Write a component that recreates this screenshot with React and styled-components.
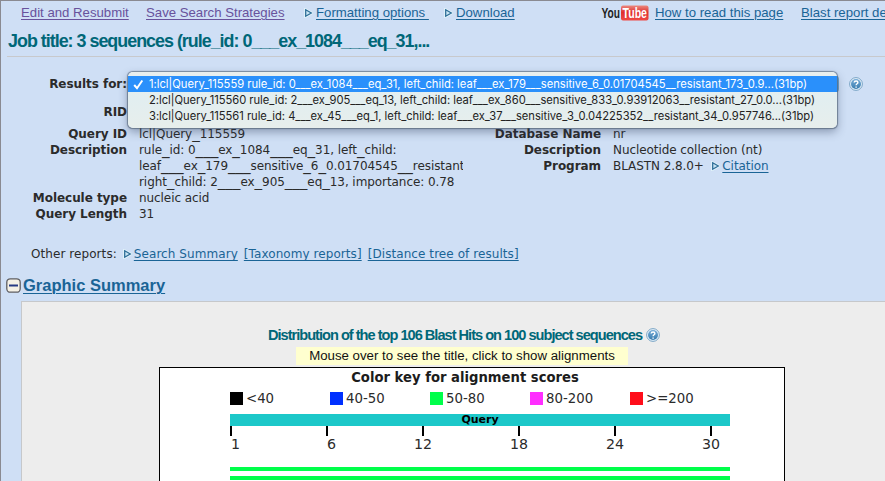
import React from 'react';
import styled, { createGlobalStyle } from 'styled-components';

const GlobalStyle = createGlobalStyle`
  * { box-sizing: border-box; }
  body { margin: 0; overflow: hidden; }
`;

const arial = '"Liberation Sans", Arial, sans-serif';
const verdana = '"DejaVu Sans", Verdana, sans-serif';

const Page = styled.div`
  position: relative;
  width: 885px;
  height: 481px;
  overflow: hidden;
  border: solid #8a8a91;
  border-width: 1px 0 0 1px;
  background: #cfdff5;
  color: #2b2b2b;
  font: 12px/16px ${verdana};
  white-space: nowrap;
`;

const Toolbar = styled.nav`
  display: flex;
  align-items: center;
  height: 24px;
  padding-left: 20px;
  font: 13.2px/16px ${arial};
`;

const ToolbarItem = styled.div`
  display: flex;
  align-items: center;
  flex: none;
  width: ${(p) => p.$width}px;
`;

const Link = styled.a`
  color: ${(p) => (p.$visited ? '#68529c' : '#1a6496')};
  text-decoration: underline;
  text-decoration-thickness: 1px;
  text-underline-offset: 2px;
  white-space: pre;
`;

const ArrowSvg = styled.svg`
  flex: none;
  width: 9px;
  height: 10px;
  margin-right: ${(p) => p.$gap}px;
`;

const HelpSvg = styled.svg`
  flex: none;
  width: 14px;
  height: 14px;
`;

const YouTube = styled.div`
  display: flex;
  align-items: center;
  margin-right: 6px;
  height: 16px;
  font: 700 13px/14px ${arial};
`;

const LogoSvg = styled.svg`
  width: 48px;
  height: 16px;
`;

const JobTitle = styled.h1`
  height: 32px;
  margin: 0 0 0 6px;
  padding-left: 1px;
  border-bottom: 1px solid #c8c9cc;
  color: #006778;
  font: 700 17.9px/32px ${arial};
  letter-spacing: -1px;
`;

const ResultsRow = styled.div`
  display: flex;
  align-items: center;
  height: 18px;
  margin-top: 18px;
`;

const Label = styled.b`
  flex: none;
  width: 126px;
  text-align: right;
  letter-spacing: -0.05px;
`;

const SelectBox = styled.div`
  width: 711px;
  height: 18px;
  margin: 0 10px 0 1px;
  border: 1px solid #6ea8d4;
  border-radius: 4px;
  background: #78b4e8;
`;

const RidRow = styled.div`
  display: flex;
  margin: 11px 0 6px;
`;

const Details = styled.div`
  display: flex;
`;

const DetailColumn = styled.dl`
  width: ${(p) => p.$width}px;
  margin: 0;
`;

const DetailRow = styled.div`
  display: flex;
`;

const Value = styled.div`
  display: flex;
  flex-direction: column;
  width: 324px;
  margin-left: 12px;
  overflow: hidden;
  letter-spacing: -0.07px;
`;

const InlineValue = styled.div`
  display: flex;
  align-items: center;
`;

const Rule = styled.span`
  font-size: 15.2px;
  line-height: 0;
`;

const Reports = styled.div`
  display: flex;
  align-items: center;
  gap: 6px;
  margin: 24px 0 0 30px;
  letter-spacing: 0.07px;
`;

const SectionHeader = styled.div`
  display: flex;
  align-items: center;
  gap: 2px;
  height: 20px;
  margin: 13px 0 0 5px;
`;

const SectionLink = styled(Link)`
  font: 700 16.5px/20px ${arial};
`;

const Panel = styled.section`
  display: flex;
  flex-direction: column;
  height: 200px;
  margin: 6px 0 0 20px;
  padding: 23px 0 0 137px;
  border: solid #c6c8cb;
  border-width: 1px 0 0 1px;
  background: #ededed;
`;

const ChartTitle = styled.div`
  display: flex;
  justify-content: center;
  align-items: center;
  gap: 4px;
  width: 610px;
  height: 20px;
  color: #006778;
  font: 700 14.6px/20px ${arial};
  letter-spacing: -1px;
`;

const Hint = styled.div`
  width: 332px;
  height: 18px;
  margin: 2px 0 2px 137px;
  background: #ffffcf;
  color: #111;
  font: 13.26px/18px ${arial};
  text-align: center;
`;

const Chart = styled.div`
  width: 626px;
  height: 140px;
  padding: 1px 54px 0 70px;
  border: 1px solid #000;
  background: #fff;
`;

const KeyTitle = styled.div`
  width: 470px;
  font: 700 13.2px/17px ${verdana};
  text-align: center;
  color: #1c1c1c;
`;

const Key = styled.div`
  display: grid;
  grid-template-columns: repeat(5, 100px);
  margin-top: 6px;
`;

const KeyItem = styled.div`
  display: flex;
  align-items: center;
  gap: 3px;
  height: 13px;
  font-size: 13.3px;
`;

const Swatch = styled.span`
  width: 13px;
  height: 13px;
  background: ${(p) => p.$color};
`;

const QueryBar = styled.div`
  width: 500px;
  height: 12px;
  margin-top: 9px;
  background: #1dc8c9;
  color: #000;
  font: 700 11px/12px ${verdana};
  text-align: center;
`;

const Axis = styled.div`
  display: grid;
  grid-template-columns: repeat(6, 96px);
  height: 41px;
`;

const Tick = styled.div`
  &::before {
    content: '';
    display: block;
    width: 2px;
    height: 10px;
    background: #000;
  }
`;

const TickLabel = styled.div`
  margin-left: ${(p) => (p.$wide ? -8 : 1)}px;
  font-size: 14.2px;
`;

const Hit = styled.div`
  width: 500px;
  height: 4px;
  margin-bottom: 5px;
  background: #00ff4a;
`;

const Menu = styled.div`
  position: absolute;
  left: 127px;
  top: 71px;
  width: 709px;
  height: 56px;
  padding-top: 4px;
  border-radius: 5px;
  background: linear-gradient(#e9efee, #e2eef0 50%, #e7eeec);
  box-shadow: 0 0 1px 0.5px rgba(70, 85, 105, 0.6), 0 4px 10px rgba(40, 55, 85, 0.42);
  font: 11.2px/16px Inter, sans-serif;
`;

const Option = styled.div`
  display: flex;
  align-items: center;
  height: 16px;
  background: ${(p) => (p.$selected ? '#2a90fb' : 'transparent')};
  color: ${(p) => (p.$selected ? '#fff' : '#222')};
  letter-spacing: ${(p) => p.$spacing || 0}px;
`;

const CheckSlot = styled.span`
  display: flex;
  width: 21px;
  padding-left: 5px;
`;

function Arrow({ gap = 3 }) {
  return (
    <ArrowSvg $gap={gap} viewBox="0 0 9 10">
      <path d="M1.5 1.5 7.5 5 1.5 8.5Z" fill="#d5effa" stroke="#e4f5fb" strokeWidth="2.6" />
      <path d="M1.7 1.8 7.3 5 1.7 8.2Z" fill="#c9e5f3" stroke="#306f99" strokeWidth="1.3" />
    </ArrowSvg>
  );
}

function Help() {
  return (
    <HelpSvg viewBox="0 0 14 14">
      <defs>
        <linearGradient id="helpFill" x1="0" y1="0" x2="0" y2="1">
          <stop offset="0" stopColor="#77add8" />
          <stop offset="1" stopColor="#397cae" />
        </linearGradient>
      </defs>
      <circle cx="7" cy="7" r="6.4" fill="#e5f1fa" stroke="#6f9dc0" strokeWidth="0.9" />
      <circle cx="7" cy="7" r="5" fill="url(#helpFill)" />
      <path d="M5.2 5.6C5.2 3.4 8.9 3.5 8.9 5.5 8.9 6.8 7.1 6.7 7.1 8.2M7.1 9.4v1.3" fill="none" stroke="#fff" strokeWidth="1.4" />
    </HelpSvg>
  );
}

// The underscores run together as one continuous rule.
function Underscored({ text }) {
  return (
    <span>
      {text.split(/(_+)/).map((part, i) => (part[0] === '_' ? <Rule key={i}>{part}</Rule> : part))}
    </span>
  );
}

const options = [
  '1:lcl|Query_115559 rule_id: 0___ex_1084___eq_31, left_child: leaf___ex_179___sensitive_6_0.01704545__resistant_173_0.9...(31bp)',
  '2:lcl|Query_115560 rule_id: 2___ex_905___eq_13, left_child: leaf___ex_860___sensitive_833_0.93912063__resistant_27_0.0...(31bp)',
  '3:lcl|Query_115561 rule_id: 4___ex_45___eq_1, left_child: leaf___ex_37___sensitive_3_0.04225352__resistant_34_0.957746...(31bp)',
];

const scores = [
  ['#000000', '<40'],
  ['#0030ff', '40-50'],
  ['#00ff4a', '50-80'],
  ['#ff2eff', '80-200'],
  ['#ff0d1a', '>=200'],
];

const ticks = [1, 6, 12, 18, 24, 30];

export default function App() {
  return (
    <Page>
      <GlobalStyle />
      <Toolbar>
        <ToolbarItem $width={125}><Link $visited>Edit and Resubmit</Link></ToolbarItem>
        <ToolbarItem $width={158}><Link $visited>Save Search Strategies</Link></ToolbarItem>
        <ToolbarItem $width={140}><Arrow /><Link>{'Formatting options '}</Link></ToolbarItem>
        <ToolbarItem $width={157}><Arrow /><Link>Download</Link></ToolbarItem>
        <ToolbarItem $width={200}>
          <YouTube>
            <LogoSvg viewBox="0 0 48 16">
              <defs>
                <linearGradient id="tube" x1="0" y1="0" x2="0" y2="1">
                  <stop offset="0" stopColor="#ea8a80" />
                  <stop offset="0.45" stopColor="#e02f2d" />
                  <stop offset="1" stopColor="#ef4a45" />
                </linearGradient>
              </defs>
              <rect x="20" y="0.5" width="27.5" height="15" rx="2" fill="url(#tube)" />
              <text x="0.5" y="13" textLength="18.5" lengthAdjust="spacingAndGlyphs" fill="#1f1f1f" fontSize="14.5">You</text>
              <text x="21.5" y="13" textLength="24.5" lengthAdjust="spacingAndGlyphs" fill="#fff" fontSize="14.5">Tube</text>
            </LogoSvg>
          </YouTube>
          <Link>How to read this page</Link>
        </ToolbarItem>
        <ToolbarItem $width={120}><Link>Blast report description</Link></ToolbarItem>
      </Toolbar>

      <JobTitle>Job title: 3 sequences (rule_id: 0___ex_1084___eq_31,...</JobTitle>

      <ResultsRow>
        <Label>Results for:</Label>
        <SelectBox />
        <Help />
      </ResultsRow>
      <RidRow><Label>RID</Label></RidRow>

      <Details>
        <DetailColumn $width={474}>
          <DetailRow><Label>Query ID</Label><Value><Underscored text="lcl|Query_115559" /></Value></DetailRow>
          <DetailRow>
            <Label>Description</Label>
            <Value>
              <Underscored text="rule_id: 0___ex_1084___eq_31, left_child:" />
              <Underscored text="leaf___ex_179___sensitive_6_0.01704545__resistant_173" />
              <Underscored text="right_child: 2___ex_905___eq_13, importance: 0.78" />
            </Value>
          </DetailRow>
          <DetailRow><Label>Molecule type</Label><Value>nucleic acid</Value></DetailRow>
          <DetailRow><Label>Query Length</Label><Value>31</Value></DetailRow>
        </DetailColumn>
        <DetailColumn $width={400}>
          <DetailRow><Label>Database Name</Label><Value>nr</Value></DetailRow>
          <DetailRow><Label>Description</Label><Value>Nucleotide collection (nt)</Value></DetailRow>
          <DetailRow>
            <Label>Program</Label>
            <Value><InlineValue>{'BLASTN 2.8.0+\u00a0\u00a0'}<Arrow gap={2} /><Link>Citation</Link></InlineValue></Value>
          </DetailRow>
        </DetailColumn>
      </Details>

      <Reports>
        Other reports:
        <InlineValue><Arrow gap={2} /><Link>Search Summary</Link></InlineValue>
        <Link>[Taxonomy reports]</Link>
        <Link>[Distance tree of results]</Link>
      </Reports>

      <SectionHeader>
        <svg width="15" height="15" viewBox="0 0 15 15">
          <rect x="0.8" y="0.8" width="13.4" height="13.4" rx="3.5" fill="#f5f1e6" stroke="#5e5e62" strokeWidth="1.3" />
          <path d="M3 7.5h9" stroke="#263a85" strokeWidth="2" />
        </svg>
        <SectionLink>Graphic Summary</SectionLink>
      </SectionHeader>

      <Panel>
        <ChartTitle>Distribution of the top 106 Blast Hits on 100 subject sequences<Help /></ChartTitle>
        <Hint>Mouse over to see the title, click to show alignments</Hint>
        <Chart>
          <KeyTitle>Color key for alignment scores</KeyTitle>
          <Key>
            {scores.map(([color, label]) => (
              <KeyItem key={label}><Swatch $color={color} />{label}</KeyItem>
            ))}
          </Key>
          <QueryBar>Query</QueryBar>
          <Axis>
            {ticks.map((n) => (
              <Tick key={n}><TickLabel $wide={n > 9}>{n}</TickLabel></Tick>
            ))}
          </Axis>
          <Hit />
          <Hit />
        </Chart>
      </Panel>

      <Menu>
        {options.map((text, i) => (
          <Option key={text} $selected={i === 0} $spacing={i === 0 ? 0 : -0.025}>
            <CheckSlot>
              {i === 0 && (
                <svg width="11" height="11" viewBox="0 0 11 11">
                  <path d="M1.2 6 4 9.2 9.3 1.5" fill="none" stroke="#fff" strokeWidth="2" />
                </svg>
              )}
            </CheckSlot>
            {text}
          </Option>
        ))}
      </Menu>
    </Page>
  );
}
